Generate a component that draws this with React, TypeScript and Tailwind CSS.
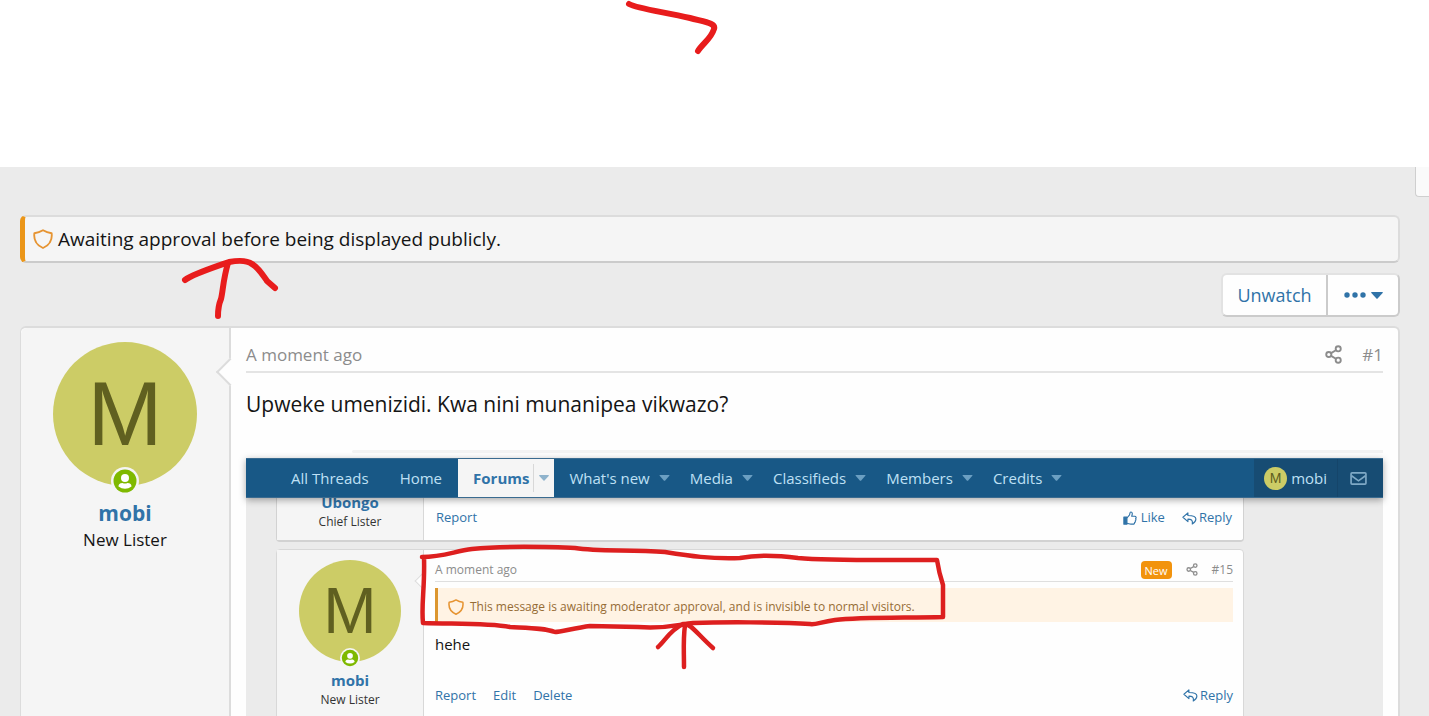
import * as React from "react";

interface IconProps {
  className?: string;
}

const ShieldIcon = ({ className }: IconProps) => (
  <svg viewBox="0 0 20 20" className={className} fill="none" stroke="currentColor" strokeWidth="1.9" strokeLinejoin="round">
    <path d="M10 1.2C7.5 2.7 4.5 3.8 1.4 4.2C.5 10.5 3.6 16.2 10 19C16.4 16.2 19.5 10.5 18.6 4.2C15.5 3.8 12.5 2.7 10 1.2Z" />
  </svg>
);

const ShareIcon = ({ className }: IconProps) => (
  <svg viewBox="0 0 18 20" className={className} fill="none" stroke="currentColor" strokeWidth="2">
    <circle cx="14" cy="4" r="2.7" />
    <circle cx="4" cy="10" r="2.7" />
    <circle cx="14" cy="16" r="2.7" />
    <path d="M6.5 8.5L11.5 5.5M6.5 11.5L11.5 14.5" />
  </svg>
);

const ReplyIcon = ({ className }: IconProps) => (
  <svg viewBox="0 0 16 14" className={className} fill="none" stroke="currentColor" strokeWidth="1.2" strokeLinejoin="round">
    <path d="M6.3 1L.9 5.7L6.3 10.3V7.7C9.6 7.7 11.8 8.5 11 12.9C13.2 11.6 14.9 9.8 14.9 7.6C14.9 4.6 11.5 3.7 6.3 3.7Z" />
  </svg>
);

const LikeIcon = ({ className }: IconProps) => (
  <svg viewBox="0 0 16 16" className={className} fill="none" stroke="currentColor" strokeWidth="1.3" strokeLinejoin="round">
    <path d="M1 7H4.5V15H1Z" fill="currentColor" />
    <path d="M4.5 8L7.3 4.6C7.9 3.7 7.6 1.2 9 1.1C10.9 1 11 3.4 9.9 6H13.4C15.1 6 15.4 8 14.4 8.8C15 9.8 14.7 10.8 14 11.3C14.3 12.2 13.9 13 13.2 13.3C13.3 14.4 12.6 15 11.5 15H9C7 15 6.4 14 4.5 14" />
  </svg>
);

const MailIcon = ({ className }: IconProps) => (
  <svg viewBox="0 0 18 14" className={className} fill="none" stroke="currentColor" strokeWidth="1.8">
    <rect x="1" y="1" width="16" height="12" rx="1" />
    <path d="M1.5 4L9 9.5L16.5 4" />
  </svg>
);

const Caret = ({ className }: IconProps) => (
  <svg viewBox="0 0 12 7" className={className} fill="currentColor">
    <path d="M.4 0H11.6Q12 .5 11.6 1L6.6 6.6Q6 7 5.4 6.6L.4 1Q0 .5 .4 0Z" />
  </svg>
);

const OnlineIcon = ({ className }: IconProps) => (
  <svg viewBox="0 0 28 28" className={className}>
    <circle cx="14" cy="14" r="14" fill="#f5f5f5" />
    <circle cx="14" cy="14" r="11.5" fill="#7fb900" />
    <circle cx="14" cy="11" r="4" fill="#fff" />
    <path d="M7.5 19.5C7.5 16.5 10 16 11.5 16Q14 17.2 16.5 16C18 16 20.5 16.5 20.5 19.5Q17.5 21.8 14 21.8T7.5 19.5Z" fill="#fff" />
  </svg>
);

const menuItems = ["What's new", "Media", "Classifieds", "Members", "Credits"];

const NavBar = () => (
  <nav className="relative z-10 flex h-10 items-stretch border-y border-[#3a6b90] bg-[#185886] pl-[30px] text-[15px] text-[#bfe0f5] shadow-[0_2px_7px_rgba(0,0,0,0.35)]">
    <a href="#threads" className="flex items-center px-[15px]">
      All Threads
    </a>
    <a href="#home" className="flex items-center px-4">
      Home
    </a>
    <div className="flex items-center bg-[#f5f5f5] text-[#3073a8]">
      <a href="#forums" className="pl-[15px] font-bold">
        Forums
      </a>
      <span className="ml-1 h-7 border-l border-[#d8d8d8]" />
      <button type="button" aria-label="Toggle forums menu" className="flex h-full w-5 items-center justify-center">
        <Caret className="h-[6px] w-[10px] text-[#8fb3cc]" />
      </button>
    </div>
    <div className="flex items-center gap-5 pl-[15px]">
      {menuItems.map((item) => (
        <a key={item} href="#menu" className="flex items-center gap-[9px]">
          {item}
          <Caret className="h-[6px] w-[11px] text-[#6b9fc2]" />
        </a>
      ))}
    </div>
    <div className="ml-auto flex bg-[#174c73]">
      <a href="#account" className="flex items-center gap-1 border-r border-[#15456a] px-[10px]">
        <span className="flex size-[23px] items-center justify-center rounded-full bg-[#cccc66] font-[family-name:Liberation_Sans] text-sm leading-none text-[#606020]">
          M
        </span>
        mobi
      </a>
      <a href="#inbox" aria-label="Inbox" className="flex w-[45px] items-center pl-3">
        <MailIcon className="h-[13px] w-[17px] text-[#7fa9c6]" />
      </a>
    </div>
  </nav>
);

const EmbeddedThread = () => (
  <div>
    <div className="ml-[106px] h-[3px] rounded-l-full bg-[#f3f3f3]" />
    <div className="h-[5px]" />
    <NavBar />
    <div className="overflow-hidden bg-[#ebebeb] pr-[139px] pl-[30px] text-[13px] text-[#3073a8]">
      <article className="flex h-11 rounded-b-sm border border-t-0 border-b-2 border-[#d2d2d2] bg-[#fefefe]">
        <div className="-mt-2 w-[147px] border-r border-[#d8d8d8] bg-[#f5f5f5] text-center">
          <h4 className="text-[15px] leading-6 font-bold">Ubongo</h4>
          <p className="text-xs leading-4 text-[#333]">Chief Lister</p>
        </div>
        <div className="flex flex-1 items-center gap-[17px] pr-[11px] pb-[2px] pl-3">
          <a href="#report" className="mr-auto">
            Report
          </a>
          <a href="#like" className="flex items-center gap-1">
            <LikeIcon className="size-[14px]" />
            Like
          </a>
          <a href="#reply" className="flex items-center gap-[2px]">
            <ReplyIcon className="h-[13px] w-[15px]" />
            Reply
          </a>
        </div>
      </article>
      <article className="mt-[7px] flex min-h-[190px] rounded-t-sm border border-[#d8d8d8] bg-[#fefefe]">
        <div className="relative w-[147px] border-r border-[#d8d8d8] bg-[#f5f5f5] pt-[10px] text-center">
          <div className="relative mx-auto flex size-[102px] items-center justify-center rounded-full bg-[#cccc66] font-[family-name:Liberation_Sans] text-[64px] text-[#606020]">
            M
            <OnlineIcon className="absolute -bottom-[6px] left-[41px] size-5" />
          </div>
          <h4 className="mt-[6px] text-[15px] leading-6 font-bold">mobi</h4>
          <p className="text-xs leading-4 text-[#333]">New Lister</p>
          <span className="absolute top-[25px] -right-[6px] size-3 rotate-45 border-b border-l border-[#dcdcdc] bg-[#fefefe]" />
        </div>
        <div className="flex-1 pr-[10px] pl-[11px]">
          <header className="mt-2 flex h-6 items-center border-b border-[#dfdfdf] text-xs text-[#8c8c8c]">
            <span className="mr-auto">A moment ago</span>
            <span className="rounded-sm bg-[#f2930d] px-[4px] pt-[2px] text-[11px] leading-4 text-white">New</span>
            <a href="#share" aria-label="Share" className="mx-[14px]">
              <ShareIcon className="h-[13px] w-3" />
            </a>
            <a href="#post-15">#15</a>
          </header>
          <div className="mt-[6px] flex h-[34px] items-center gap-[6px] border-l-[3px] border-[#dc962f] bg-[#fff3e4] pt-1 pl-[10px] text-xs text-[#966c35]">
            <ShieldIcon className="size-4 text-[#e69432]" />
            This message is awaiting moderator approval, and is invisible to normal visitors.
          </div>
          <p className="mt-3 text-[15px] leading-5 text-[#141414]">hehe</p>
          <footer className="mt-[31px] flex items-center gap-[17px] leading-5">
            <a href="#report-15">Report</a>
            <a href="#edit">Edit</a>
            <a href="#delete">Delete</a>
            <a href="#reply-15" className="ml-auto flex items-center gap-[2px]">
              <ReplyIcon className="h-[13px] w-[15px]" />
              Reply
            </a>
          </footer>
        </div>
      </article>
    </div>
  </div>
);

// Freehand marker strokes drawn over the page
const MarkerStrokes = () => (
  <svg className="pointer-events-none absolute top-0 left-0 z-20" width="1429" height="716" fill="none" strokeLinecap="round" strokeLinejoin="round">
    <g stroke="#e81c1c" strokeWidth="6">
      <path d="M629 4C638 9 665 12 690 18C705 22 716 23 714 29C711 39 703 43 698 51" />
      <path d="M185 280C193 274 215 267 229 262C240 260 248 261 252 264C258 267 263 275 267 281L275 288" />
      <path d="M228 263C223 280 223 291 221 299C218 306 218 310 218 316" />
    </g>
    <g stroke="#dd1f1f" strokeWidth="4.5">
      <path d="M422 557C443 557 455 551 472 549C510 545 550 547 575 548C600 552 630 549 665 552C690 556 710 559 740 558C755 555 775 555 798 558C830 561 885 560 937 560C939 573 941 579 943 585V617C905 618 860 617 835 620C820 622 816 625 810 624C780 622 720 622 693 623C680 624 670 629 638 627L590 626C575 628 560 632 555 632C545 628 530 628 510 627C490 623 460 624 423 623C421 605 425 588 424 557" />
      <path d="M658 647C665 641 670 630 683 624C691 623 697 634 713 648M685 625C683 640 684 650 684 667" />
    </g>
  </svg>
);

const App = () => {
  return (
    <div className="relative flex h-screen flex-col overflow-hidden bg-white font-['Open_Sans','Noto_Sans',sans-serif] text-[#141414]">
      <div className="h-[167px] shrink-0" />
      <main className="relative flex flex-1 flex-col bg-[#ebebeb] pt-12 pr-[29px] pl-5">
        <div className="absolute top-0 right-0 h-[30px] w-[14px] rounded-bl-sm border-b border-l border-[#cfcfcf] bg-[#fafafa]" />

        <div className="flex h-12 items-center gap-[5px] rounded-md border-2 border-l-[5px] border-[#dcdcdc] border-b-[#cbcbcb] border-l-[#eb9619] bg-[#f5f5f5] pl-2 text-[19px]">
          <ShieldIcon className="size-5 text-[#e69432]" />
          Awaiting approval before being displayed publicly.
        </div>

        <div className="mt-[10px] flex h-11 self-end rounded-md border-2 border-[#e2e2e2] border-r-[#cbcbcb] border-b-[#cbcbcb] bg-[#fefefe] text-[18px] text-[#3073a8]">
          <button type="button" className="w-[105px] border-r-2 border-[#cbcbcb]">
            Unwatch
          </button>
          <button type="button" aria-label="More options" className="flex w-[70px] items-center justify-center gap-[5px]">
            <svg viewBox="0 0 22 6" className="h-[6px] w-[22px]" fill="currentColor">
              <circle cx="3" cy="3" r="2.7" />
              <circle cx="11" cy="3" r="2.7" />
              <circle cx="19" cy="3" r="2.7" />
            </svg>
            <Caret className="h-[7px] w-3" />
          </button>
        </div>

        <article className="mt-[9px] flex flex-1 rounded-t-md border-2 border-b-0 border-l border-[#dcdcdc] bg-[#fefefe]">
          <section className="relative w-[210px] shrink-0 rounded-tl-md border-r-2 border-[#dcdcdc] bg-[#f5f5f5] pt-[14px] text-center">
            <div className="relative mx-auto flex size-36 items-center justify-center rounded-full bg-[#cccc66] font-[family-name:Liberation_Sans] text-[90px] text-[#606020]">
              M
              <OnlineIcon className="absolute -bottom-[9px] left-[58px] size-7" />
            </div>
            <h3 className="mt-3 text-[21px] leading-[30px] font-bold text-[#3073a8]">mobi</h3>
            <p className="text-[17px] leading-6">New Lister</p>
            <span className="absolute top-[34px] -right-[11px] size-5 rotate-45 border-b-2 border-l-2 border-[#dcdcdc] bg-[#fefefe]" />
          </section>
          <section className="min-w-0 flex-1 px-[15px]">
            <header className="mt-[10px] flex h-[35px] items-center border-b-2 border-[#e4e4e4] text-[17px] text-[#8c8c8c]">
              <span className="mr-auto">A moment ago</span>
              <a href="#share-1" aria-label="Share" className="mr-5">
                <ShareIcon className="h-[19px] w-[17px]" />
              </a>
              <a href="#post-1">#1</a>
            </header>
            <p className="mt-4 mb-[31px] text-[21px] leading-[30px]">
              Upweke umenizidi. Kwa nini munanipea vikwazo?
            </p>
            <EmbeddedThread />
          </section>
        </article>
      </main>
      <MarkerStrokes />
    </div>
  );
};

export default App;
